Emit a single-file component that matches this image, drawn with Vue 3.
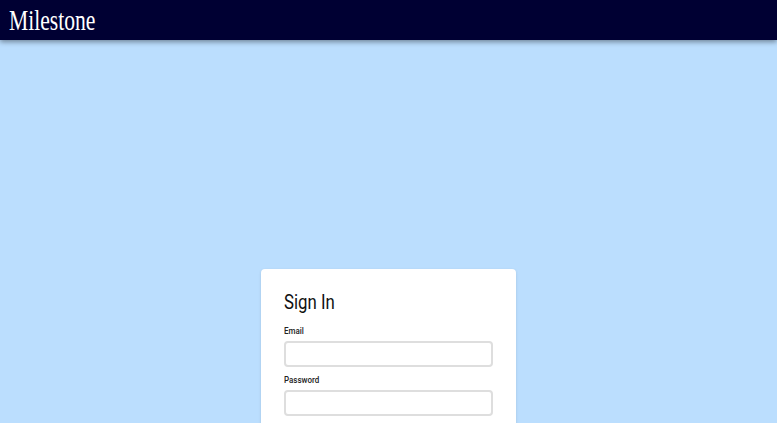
<script setup>
</script>

<template>
  <div class="page">
    <header class="bar">
      <span class="logo">Milestone</span>
    </header>
    <main class="main">
      <form class="card" @submit.prevent>
        <h1 class="title">Sign In</h1>
        <div class="field">
          <label class="label" for="email">Email</label>
          <input id="email" class="input" type="email" />
        </div>
        <div class="field">
          <label class="label" for="password">Password</label>
          <input id="password" class="input" type="password" />
        </div>
      </form>
    </main>
  </div>
</template>

<style>
html, body { margin: 0; overflow: hidden; }
</style>

<style scoped>
.page {
  height: 423px;
  overflow: hidden;
  background: #bbdefe;
  font-family: Roboto, sans-serif;
}
.bar {
  height: 40px;
  background: #000033;
  box-shadow: 0 2px 5px rgba(0, 0, 0, 0.4);
  display: flex;
  align-items: center;
  padding-left: 9px;
}
.logo {
  font-family: "Liberation Serif", serif;
  font-size: 30px;
  color: #fff;
  line-height: 1;
  display: inline-block;
  transform: scaleX(0.72);
  transform-origin: left center;
}
.main {
  display: flex;
  justify-content: center;
  padding-top: 229px;
}
.card {
  width: 255px;
  box-sizing: border-box;
  height: 220px;
  padding: 22px 23px;
  background: #fff;
  border-radius: 4px;
  box-shadow: 0 1px 3px rgba(0, 0, 0, 0.12);
}
.title {
  margin: 0 0 12px;
  font-size: 20px;
  line-height: 23px;
  font-weight: 400;
  color: #111;
  transform: scaleX(0.84);
  transform-origin: left center;
}
.field {
  margin-bottom: 8px;
}
.label {
  display: block;
  font-size: 9.5px;
  line-height: 10px;
  font-weight: 500;
  color: #222;
  margin-bottom: 5px;
  transform: scaleX(0.84);
  transform-origin: left center;
}
.input {
  display: block;
  width: 100%;
  height: 26px;
  box-sizing: border-box;
  border: 2px solid #dedede;
  border-radius: 4px;
  background: #fff;
  outline: none;
  padding: 0 8px;
}
</style>
